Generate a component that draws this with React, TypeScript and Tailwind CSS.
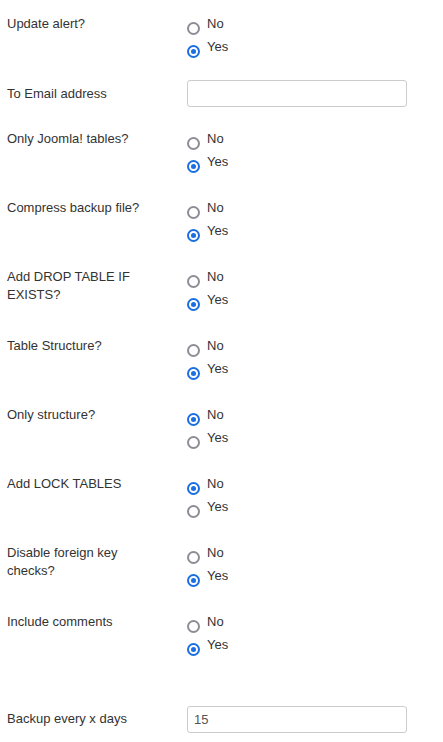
type Opt = { label: string; checked: boolean };

const radioRows: { label: string; value: "No" | "Yes" }[] = [
  { label: "Only Joomla! tables?", value: "Yes" },
  { label: "Compress backup file?", value: "Yes" },
  { label: "Add DROP TABLE IF EXISTS?", value: "Yes" },
  { label: "Table Structure?", value: "Yes" },
  { label: "Only structure?", value: "No" },
  { label: "Add LOCK TABLES", value: "No" },
  { label: "Disable foreign key checks?", value: "Yes" },
  { label: "Include comments", value: "Yes" },
];

function Radio({ label, checked }: Opt) {
  return (
    <label className="flex h-[23px] items-start">
      {checked ? (
        <span className="mt-[7px] flex h-[13px] w-[13px] items-center justify-center rounded-full border-2 border-[#1a6fe3]">
          <span className="h-[5px] w-[5px] rounded-full bg-[#1a6fe3]" />
        </span>
      ) : (
        <span className="mt-[7px] h-[13px] w-[13px] rounded-full border-2 border-[#8d8d96]" />
      )}
      <span className="ml-[7px] leading-[18px]">{label}</span>
    </label>
  );
}

function RadioRow({ label, value, className }: { label: string; value: "No" | "Yes"; className?: string }) {
  return (
    <div className={"flex " + (className ?? "")}>
      <div className="w-[180px] shrink-0 pr-[30px] leading-[18px]">{label}</div>
      <div className="flex flex-col">
        <Radio label="No" checked={value === "No"} />
        <Radio label="Yes" checked={value === "Yes"} />
      </div>
    </div>
  );
}

function TextRow({ label, value, className, labelPad }: { label: string; value: string; className?: string; labelPad: string }) {
  return (
    <div className={"flex items-start " + (className ?? "")}>
      <div className={"w-[180px] shrink-0 leading-[18px] " + labelPad}>{label}</div>
      <input
        type="text"
        defaultValue={value}
        className="h-[27px] w-[220px] rounded-[3px] border border-[#cccccc] bg-white px-[6px] text-[13px] text-[#555] outline-none"
      />
    </div>
  );
}

export default function App() {
  return (
    <div
      className="min-h-screen bg-white pl-[7px] pt-[15px] text-[13px] text-[#333]"
      style={{ fontFamily: '"Liberation Sans", Arial, sans-serif' }}
    >
      <RadioRow label="Update alert?" value="Yes" />
      <TextRow label="To Email address" value="" className="mt-[19px]" labelPad="pt-[5px]" />
      <div className="mt-[23px] flex flex-col gap-[23px]">
        {radioRows.map((r) => (
          <RadioRow key={r.label} label={r.label} value={r.value} />
        ))}
      </div>
      <TextRow label="Backup every x days" value="15" className="mt-[47px]" labelPad="pt-[4px]" />
    </div>
  );
}
